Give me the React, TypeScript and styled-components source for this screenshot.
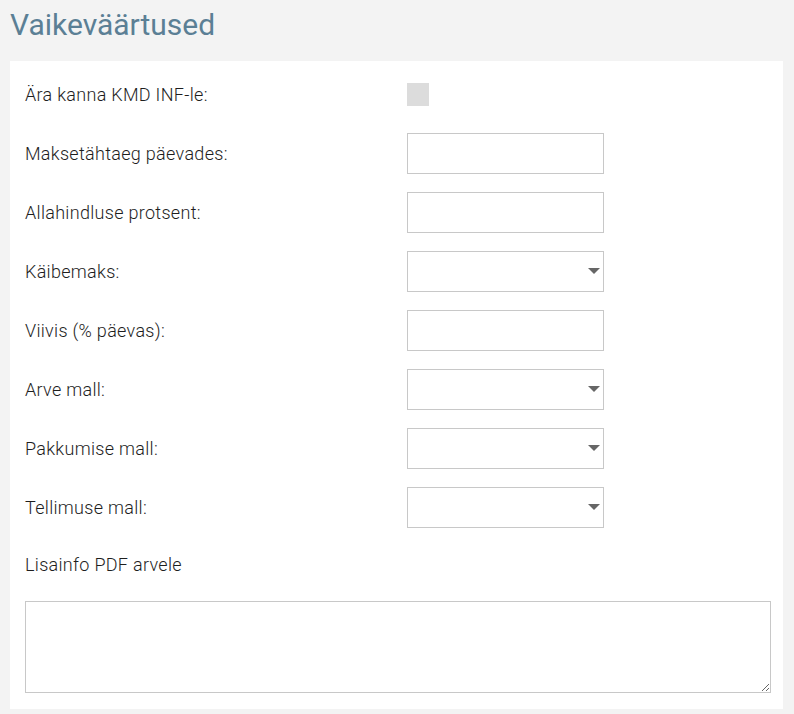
import React from "react";
import styled, { createGlobalStyle } from "styled-components";

const Global = createGlobalStyle`
  html, body { margin: 0; padding: 0; background: #f3f3f3; }
  body { font-family: Roboto, "Liberation Sans", sans-serif; }
  * { box-sizing: border-box; }
`;

const Page = styled.div`
  padding: 0 11px 5px 10px;
  background: #f3f3f3;
`;

const Title = styled.h1`
  margin: 0;
  padding-top: 6px;
  height: 61px;
  font-size: 30px;
  line-height: 38px;
  font-weight: 400;
  color: #5b7f95;
`;

const Panel = styled.div`
  background: #ffffff;
  padding: 13px 12px 16px 15px;
`;

const Form = styled.div`
  display: grid;
  grid-template-columns: 382px 197px;
  row-gap: 18px;
  align-items: center;
`;

const Label = styled.label`
  font-size: 18px;
  font-weight: 300;
  letter-spacing: 0.3px;
  color: #1e1e1e;
  line-height: 41px;
`;

const Checkbox = styled.span`
  display: block;
  width: 22px;
  height: 23px;
  background: #dcdcdc;
`;

const Input = styled.input`
  display: block;
  width: 197px;
  height: 41px;
  border: 1px solid #c8c8c8;
  border-radius: 0;
  padding: 0 10px;
  font: inherit;
  outline: none;
`;

const SelectBox = styled.div`
  position: relative;
  width: 197px;
  height: 41px;
  border: 1px solid #c8c8c8;
  background: #fff;
`;

const Caret = styled.span`
  position: absolute;
  right: 3px;
  top: 16px;
  width: 0;
  height: 0;
  border-left: 6px solid transparent;
  border-right: 6px solid transparent;
  border-top: 6px solid #666;
`;

const NoteLabel = styled.div`
  font-size: 18px;
  font-weight: 300;
  letter-spacing: 0.3px;
  color: #1e1e1e;
  height: 37px;
  line-height: 37px;
  margin-top: 18px;
`;

const TextArea = styled.textarea`
  display: block;
  margin-top: 18px;
  width: 100%;
  height: 92px;
  border: 1px solid #c8c8c8;
  border-radius: 0;
  font: inherit;
  outline: none;
  resize: both;
`;

type Row = { label: string; kind: "check" | "input" | "select" };

const rows: Row[] = [
  { label: "Ära kanna KMD INF-le:", kind: "check" },
  { label: "Maksetähtaeg päevades:", kind: "input" },
  { label: "Allahindluse protsent:", kind: "input" },
  { label: "Käibemaks:", kind: "select" },
  { label: "Viivis (% päevas):", kind: "input" },
  { label: "Arve mall:", kind: "select" },
  { label: "Pakkumise mall:", kind: "select" },
  { label: "Tellimuse mall:", kind: "select" },
];

export default function App() {
  return (
    <>
      <Global />
      <Page>
        <Title>Vaikeväärtused</Title>
        <Panel>
          <Form>
            {rows.map((r) => (
              <React.Fragment key={r.label}>
                <Label>{r.label}</Label>
                {r.kind === "check" && <Checkbox />}
                {r.kind === "input" && <Input type="text" />}
                {r.kind === "select" && (
                  <SelectBox>
                    <Caret />
                  </SelectBox>
                )}
              </React.Fragment>
            ))}
          </Form>
          <NoteLabel>Lisainfo PDF arvele</NoteLabel>
          <TextArea />
        </Panel>
      </Page>
    </>
  );
}
